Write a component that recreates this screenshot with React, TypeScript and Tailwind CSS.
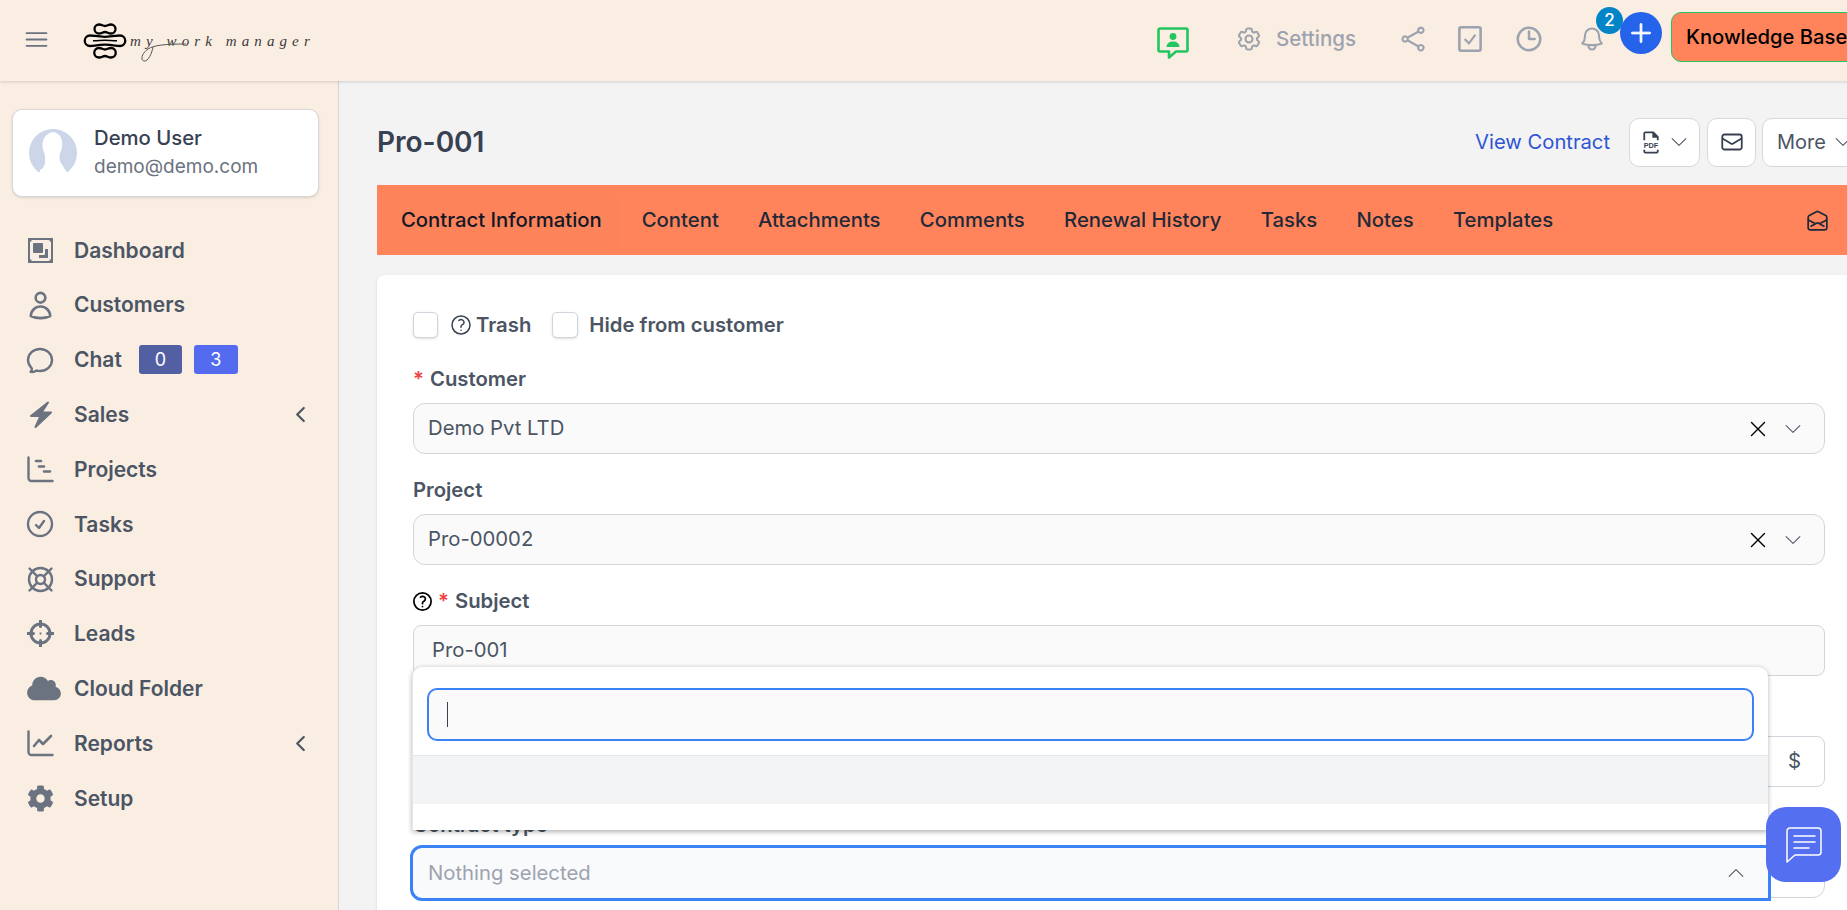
import React from "react";
import {
  HiOutlineBars3,
  HiOutlineBell,
  HiOutlineChatBubbleOvalLeft,
  HiOutlineCheckCircle,
  HiOutlineChevronDown,
  HiOutlineChevronLeft,
  HiOutlineChevronUp,
  HiOutlineClock,
  HiOutlineCog6Tooth,
  HiOutlineEnvelope,
  HiOutlineEnvelopeOpen,
  HiOutlineQuestionMarkCircle,
  HiOutlineShare,
  HiOutlineUser,
  HiOutlineXMark,
  HiPlus,
} from "react-icons/hi2";
import { FaCloud, FaCog } from "react-icons/fa";

function DashboardIcon({ className }: { className?: string }) {
  return (
    <svg viewBox="0 0 27 27" className={className} fill="none">
      <rect x="2" y="2" width="23" height="23" stroke="currentColor" strokeWidth="2" rx="1" />
      <rect x="1" y="1" width="3.5" height="3.5" fill="currentColor" />
      <rect x="22.5" y="1" width="3.5" height="3.5" fill="currentColor" />
      <rect x="1" y="22.5" width="3.5" height="3.5" fill="currentColor" />
      <rect x="22.5" y="22.5" width="3.5" height="3.5" fill="currentColor" />
      <rect x="6" y="6" width="10" height="10" rx="1" fill="currentColor" />
      <path d="M18 12h3v9h-9v-3h5a1 1 0 0 0 1-1z" fill="currentColor" />
    </svg>
  );
}

function BoltIcon({ className }: { className?: string }) {
  return (
    <svg viewBox="0 0 27 27" className={className} fill="currentColor" stroke="currentColor" strokeWidth="2" strokeLinejoin="round">
      <path d="M21 1.500L4 15h9.500L8.500 26 24 11.500h-9.500z" />
    </svg>
  );
}

function GanttIcon({ className }: { className?: string }) {
  return (
    <svg viewBox="0 0 27 27" className={className} fill="none" stroke="currentColor" strokeLinecap="round">
      <path d="M1.500 1.500V22a3 3 0 0 0 3 3h21" strokeWidth="2.400" />
      <path d="M9 5h5M12 10.500h5M17 15.500h6" strokeWidth="2.600" />
    </svg>
  );
}

function LineChartIcon({ className }: { className?: string }) {
  return (
    <svg viewBox="0 0 27 27" className={className} fill="none" stroke="currentColor" strokeLinecap="round" strokeLinejoin="round">
      <path d="M1.500 1.500V22a3 3 0 0 0 3 3h21" strokeWidth="2.400" />
      <path d="M7 16l5-6 4 4 8-8" strokeWidth="2.600" />
    </svg>
  );
}

function LifeRingIcon({ className }: { className?: string }) {
  return (
    <svg viewBox="0 0 27 27" className={className} fill="none" stroke="currentColor" strokeWidth="2.400" strokeLinecap="round">
      <circle cx="13.500" cy="13.500" r="11.500" />
      <circle cx="13.500" cy="13.500" r="4.500" />
      <path d="M2.500 2.500l7.800 7.800M24.500 2.500l-7.800 7.800M2.500 24.500l7.800-7.800M24.500 24.500l-7.800-7.800" />
    </svg>
  );
}

function TargetIcon({ className }: { className?: string }) {
  return (
    <svg viewBox="0 0 27 27" className={className} fill="none" stroke="currentColor">
      <circle cx="13.500" cy="13.500" r="9.500" strokeWidth="3" />
      <path d="M13.500 0.500v6M13.500 20.500v6M0.500 13.500h6M20.500 13.500h6" strokeWidth="3" strokeLinecap="round" />
      <path d="M13.500 12.600v1.800M12.600 13.500h1.800" strokeWidth="1.800" />
    </svg>
  );
}

function ChatUserIcon({ className }: { className?: string }) {
  return (
    <svg viewBox="0 0 32 32" className={className} fill="none">
      <path d="M3 1.500h26a1.500 1.500 0 0 1 1.500 1.500v20a1.500 1.500 0 0 1-1.500 1.500H19l-7 6v-6H3A1.500 1.500 0 0 1 1.500 23V3A1.500 1.500 0 0 1 3 1.500z" stroke="currentColor" strokeWidth="2.600" strokeLinejoin="round" />
      <circle cx="16" cy="9.500" r="3.400" fill="currentColor" />
      <path d="M9.500 20c0-3.600 2.900-5.600 6.500-5.600s6.500 2 6.500 5.600z" fill="currentColor" />
    </svg>
  );
}

function PdfIcon({ className }: { className?: string }) {
  return (
    <svg viewBox="0 0 16 20" className={className} fill="none" stroke="currentColor" strokeWidth="1.600">
      <path d="M2 8V2a1 1 0 0 1 1-1h7l4 4v3" />
      <path d="M10 1v4h4" fill="currentColor" />
      <path d="M2 16.500V18a1 1 0 0 0 1 1h10a1 1 0 0 0 1-1v-1.500" />
      <text x="8" y="14.500" textAnchor="middle" fontSize="6.500" fontWeight="700" fill="currentColor" stroke="none" fontFamily="Liberation Sans, sans-serif">PDF</text>
    </svg>
  );
}

function Avatar() {
  return (
    <svg viewBox="0 0 48 48" className="w-12 h-12 shrink-0">
      <circle cx="24" cy="24" r="24" fill="#ccd6e8" />
      <path d="M24 3c7 1 10 7 9 15-.5 4-2.500 6-2.500 10 0 4 1.500 6 3.500 9 1 2 1 3 3 4v7H11v-7c2-1 3-2 4-4 1.500-3 1-5 1-9 0-4-2-6-2.500-10C13 10 17 4 24 3z" fill="#fff" />
      <rect x="0" y="43" width="48" height="5" fill="#fff" />
    </svg>
  );
}

function ChatWidgetIcon({ className }: { className?: string }) {
  return (
    <svg viewBox="0 0 36 36" className={className} fill="none" stroke="currentColor" strokeWidth="1.500" strokeLinejoin="round" strokeLinecap="round">
      <path d="M4 1h28a3 3 0 0 1 3 3v21a3 3 0 0 1-3 3H9l-8 7V4a3 3 0 0 1 3-3z" />
      <path d="M8 9h21M8 15h21M8 21h15" />
    </svg>
  );
}

const navItems = [
  { label: "Dashboard", icon: <DashboardIcon className="w-[27px] h-[27px]" /> },
  { label: "Customers", icon: <HiOutlineUser strokeWidth={2} className="w-[31px] h-[31px] -ml-[2px]" /> },
  { label: "Chat", icon: <HiOutlineChatBubbleOvalLeft strokeWidth={1.8} className="w-[32px] h-[32px] -ml-[3px]" />, badges: true },
  { label: "Sales", icon: <BoltIcon className="w-[27px] h-[27px]" />, arrow: true },
  { label: "Projects", icon: <GanttIcon className="w-[27px] h-[27px]" /> },
  { label: "Tasks", icon: <HiOutlineCheckCircle strokeWidth={1.8} className="w-[32px] h-[32px] -ml-[3px]" /> },
  { label: "Support", icon: <LifeRingIcon className="w-[27px] h-[27px]" /> },
  { label: "Leads", icon: <TargetIcon className="w-[27px] h-[27px]" /> },
  { label: "Cloud Folder", icon: <FaCloud className="w-[34px] h-[27px]" /> },
  { label: "Reports", icon: <LineChartIcon className="w-[27px] h-[27px]" />, arrow: true },
  { label: "Setup", icon: <FaCog className="w-[27px] h-[27px]" /> },
];

const tabs = ["Content", "Attachments", "Comments", "Renewal History", "Tasks", "Notes", "Templates"];

function Sidebar() {
  return (
    <aside className="w-[339px] shrink-0 bg-[#faeee3] border-r border-[#d1d5db] pl-[12px] pr-[20px] pt-[28px]">
      <div className="w-[307px] h-[88px] flex items-center gap-[17px] pl-[16px] bg-white border border-[#d8d8d8] rounded-[10px] shadow-sm">
        <Avatar />
        <div>
          <div className="text-[20.300px] leading-[28px] font-medium text-[#374151]">Demo User</div>
          <div className="text-[19px] leading-[30px] text-[#6b7280]">demo@demo.com</div>
        </div>
      </div>
      <nav className="mt-[26px]">
        {navItems.map((item) => (
          <div key={item.label} className="h-[54.800px] flex items-center text-[#6b7280]">
            <div className="w-[62px] pl-[15px] shrink-0 flex items-center">{item.icon}</div>
            <span className="text-[21px] font-semibold text-[#4b5563]">{item.label}</span>
            {item.badges && (
              <div className="flex items-center gap-3 ml-[17px]">
                <span className="w-[43px] h-[29px] rounded-[3px] bg-[#535fa3] text-white text-[18px] flex items-center justify-center">0</span>
                <span className="w-[44px] h-[29px] rounded-[3px] bg-[#546bf0] text-white text-[18px] flex items-center justify-center">3</span>
              </div>
            )}
            {item.arrow && <HiOutlineChevronLeft strokeWidth={2.5} className="ml-auto mr-[7px] w-[21px] h-[21px] text-[#4b5563]" />}
          </div>
        ))}
      </nav>
    </aside>
  );
}

function Logo() {
  return (
    <div className="ml-[32px] flex items-center">
      <svg viewBox="0 0 44 36" className="w-[44px] h-[36px] text-black shrink-0" fill="none" stroke="currentColor" strokeWidth="2.300">
        <path d="M16 1.500c3 0 3.500 1.500 6 1.500s3-1.500 6-1.500a4.500 4.500 0 0 1 0 9c-3 0-3.500-1.500-6-1.500s-3 1.500-6 1.500a4.500 4.500 0 0 1 0-9z" />
        <path d="M7 12.500c4 0 7 1.300 15 1.300s11-1.300 15-1.300a5 5 0 0 1 0 10.500c-4 0-7-1.300-15-1.300S11 23 7 23a5 5 0 0 1 0-10.500z" />
        <path d="M10 17.800c5 0 8-.6 12-.6s7 .6 12 .6" strokeWidth="1.400" />
        <path d="M16 25c3 0 3.500 1.500 6 1.500s3-1.500 6-1.500a4.500 4.500 0 0 1 0 9.500c-3 0-3.500-1.500-6-1.500s-3 1.500-6 1.500a4.500 4.500 0 0 1 0-9.500z" />
      </svg>
      <div className="relative ml-[3px]">
        <span className="text-[15px] [font-family:'Liberation_Serif',serif] italic tracking-[5.100px] text-[#3a3a3a] whitespace-nowrap">my work manager</span>
        {/* flourish on the y of the logotype */}
        <svg viewBox="0 0 60 24" className="absolute left-[6px] top-[11px] w-[60px] h-[24px] text-[#555]" fill="none" stroke="currentColor" strokeWidth="1">
          <path d="M50 5C30 5 18 6 12 10 6 14 4 21 8 22c4 1 8-8 9-14" />
        </svg>
      </div>
    </div>
  );
}

function Header() {
  return (
    <header className="h-[81px] w-[1880px] shrink-0 bg-[#faeee3] flex items-center relative z-10 shadow-[0_1px_3px_rgba(0,0,0,0.15)]">
      <HiOutlineBars3 className="ml-[22px] w-[29px] h-[29px] text-[#6b7280] -mt-[2px]" />
      <Logo />
      <div className="ml-auto -mt-[3px] flex items-center shrink-0 text-[#9ca3af]">
        <ChatUserIcon className="w-[32px] h-[32px] text-[#22c55e] mt-[7px]" />
        <HiOutlineCog6Tooth strokeWidth={1.8} className="ml-[46px] w-[28px] h-[28px]" />
        <span className="ml-[13px] text-[20.500px] font-medium">Settings</span>
        <HiOutlineShare strokeWidth={1.8} className="ml-[43px] w-[28px] h-[28px]" />
        <svg viewBox="0 0 22 24" className="ml-[31px] w-[24px] h-[26px]" fill="none" stroke="currentColor" strokeWidth="2.400">
          <rect x="1.200" y="1.200" width="19.600" height="21.600" rx="1.500" />
          <path d="M6 12l4 4 6-8" strokeWidth="2" />
        </svg>
        <HiOutlineClock strokeWidth={2} className="ml-[32px] w-[30px] h-[30px]" />
        <div className="relative ml-[34px] mr-[14px]">
          <HiOutlineBell strokeWidth={1.8} className="w-[28px] h-[28px]" />
          <span className="absolute -top-[18px] left-[18px] w-[27px] h-[27px] rounded-full bg-[#0284c7] text-white text-[17px] font-medium flex items-center justify-center">2</span>
        </div>
        <div className="w-[42px] h-[42px] mb-[12px] rounded-full bg-[#2563eb] text-white flex items-center justify-center relative">
          <HiPlus strokeWidth={0.8} className="w-[28px] h-[28px]" />
        </div>
        <div className="ml-[9px] mb-[4px] w-[209px] h-[50px] flex items-center pl-[14px] rounded-[10px] border border-[#22c55e] bg-[#ff845c] text-black text-[20.200px] font-medium whitespace-nowrap">Knowledge Base</div>
      </div>
    </header>
  );
}

function Label({ children }: { children: React.ReactNode }) {
  return <div className="h-[24px] flex items-center text-[20.300px] font-semibold text-[#4b5563]">{children}</div>;
}

function SelectBox({ value }: { value: string }) {
  return (
    <div className="mt-[12px] h-[51px] flex items-center pl-[14px] pr-[20px] bg-[#fafafa] border border-[#d1d5db] rounded-[12px] text-[20.300px] text-[#4b5563]">
      <span>{value}</span>
      <HiOutlineXMark strokeWidth={1.3} className="ml-auto w-[26px] h-[26px] text-black" />
      <HiOutlineChevronDown strokeWidth={1.1} className="ml-[11px] w-[22px] h-[22px] text-[#4b5563]" />
    </div>
  );
}

function FormCard() {
  return (
    <div className="relative mt-[20px] w-[1488px] h-[700px] bg-white rounded-[8px] shadow-sm pl-[36px] pr-[40px] pt-[37px]">
      <div className="flex items-center h-[26px] text-[20.300px] font-semibold text-[#4b5563]">
        <span className="w-[25px] h-[26px] rounded-[5px] border border-[#d1d5db] bg-white shadow-sm" />
        <HiOutlineQuestionMarkCircle className="ml-[11px] w-[24px] h-[24px] text-[#374151]" />
        <span className="ml-[3px]">Trash</span>
        <span className="ml-[21px] w-[26px] h-[26px] rounded-[5px] border border-[#d1d5db] bg-white shadow-sm" />
        <span className="ml-[11px]">Hide from customer</span>
      </div>

      <div className="mt-[29px]">
        <Label>
          <span className="text-[#ef4444] mr-[6px]">*</span>Customer
        </Label>
        <SelectBox value="Demo Pvt LTD" />
      </div>

      <div className="mt-[24px]">
        <Label>Project</Label>
        <SelectBox value="Pro-00002" />
      </div>

      <div className="mt-[24px]">
        <Label>
          <HiOutlineQuestionMarkCircle strokeWidth={1.8} className="w-[23px] h-[23px] -ml-[2px] text-black mr-[4px]" />
          <span className="text-[#ef4444] mr-[6px]">*</span>Subject
        </Label>
        <div className="mt-[12px] h-[51px] flex items-center pl-[18px] bg-[#fafafa] border border-[#d1d5db] rounded-[8px] text-[20.300px] text-[#4b5563]">Pro-001</div>
      </div>

      <div className="mt-[24px]">
        <Label>Contract Value</Label>
        <div className="mt-[12px] h-[51px] flex items-center justify-end pr-[23px] bg-white border border-[#d1d5db] rounded-[8px] text-[20.300px] text-[#4b5563]">$</div>
      </div>

      <div className="mt-[26px]">
        <Label>Contract type</Label>
        <div className="mt-[10px] h-[51px] bg-white border border-[#d1d5db] rounded-[12px]" />
      </div>

      {/* open select: search panel */}
      <div className="absolute left-[35px] top-[391px] w-[1356px] h-[164px] bg-white rounded-t-[10px] border-t border-l border-[#e5e7eb] shadow-[0_2px_5px_rgba(0,0,0,0.3)] z-10">
        <div className="mx-[14px] mt-[21px] h-[53px] bg-[#fafafa] border-2 border-[#3b82f6] rounded-[10px] flex items-center pl-[18px]">
          <span className="w-px h-[25px] bg-[#374151]" />
        </div>
        <div className="mt-[14px] h-[49px] bg-[#f3f4f6] border-t border-[#e5e7eb]" />
      </div>

      <div className="absolute left-[33px] top-[570px] w-[1361px] h-[56px] bg-[#f9fafb] border-[3px] border-[#3b82f6] rounded-l-[12px] flex items-center pl-[15px] pr-[21px] text-[20.300px] text-[#9ca3af] z-10">
        <span>Nothing selected</span>
        <HiOutlineChevronUp strokeWidth={1.1} className="ml-auto w-[22px] h-[22px] text-[#4b5563]" />
      </div>
    </div>
  );
}

export default function App() {
  return (
    <div className="relative w-[1847px] h-[910px] overflow-hidden flex flex-col bg-[#f3f3f3] [font-family:Inter,sans-serif]">
      <Header />
      <div className="flex flex-1 min-h-0">
        <Sidebar />
        <main className="flex-1 min-w-0 pl-[38px]">
          <div className="w-[1498px] h-[104px] pt-[18px] flex items-center justify-between">
            <h1 className="text-[28px] font-semibold text-[#374151]">Pro-001</h1>
            <div className="flex items-center">
              <span className="text-[20.200px] text-[#2f55d4]">View Contract</span>
              <div className="ml-[19px] w-[71px] h-[49px] bg-white border border-[#d8d8d8] rounded-[10px] flex items-center pl-[12px] text-[#374151]">
                <PdfIcon className="w-[18px] h-[23px]" />
                <HiOutlineChevronDown strokeWidth={1.1} className="ml-[8px] w-[22px] h-[22px] text-[#4b5563]" />
              </div>
              <div className="ml-[7px] w-[49px] h-[49px] bg-white border border-[#d8d8d8] rounded-[10px] flex items-center justify-center">
                <HiOutlineEnvelope strokeWidth={1.8} className="w-[24px] h-[24px] text-[#374151]" />
              </div>
              <div className="ml-[6px] w-[113px] h-[49px] bg-white border border-[#d8d8d8] rounded-[10px] flex items-center pl-[14px] text-[20px] text-[#4b5563]">
                More
                <HiOutlineChevronDown strokeWidth={1.1} className="ml-[6px] w-[22px] h-[22px]" />
              </div>
            </div>
          </div>

          <div className="relative h-[70px] pt-[1px] flex items-center bg-[#ff845c] text-[20.300px] font-medium text-[#1f2937]">
            <div className="ml-[6px] h-[56px] flex items-center px-[18px] rounded-[8px] bg-[#fc835a] text-[#111827]">Contract Information</div>
            <div className="ml-[22px] flex items-center gap-[39.300px]">
              {tabs.map((tab) => (
                <span key={tab}>{tab}</span>
              ))}
            </div>
            <HiOutlineEnvelopeOpen strokeWidth={1.8} className="absolute left-[1429px] w-[23px] h-[23px] text-[#1f2937]" />
          </div>

          <FormCard />
        </main>
      </div>

      <div className="fixed left-[1766px] top-[807px] w-[75px] h-[75px] rounded-[20px] bg-[#546ff0] text-white flex items-center justify-center z-20">
        <ChatWidgetIcon className="w-[36px] h-[36px]" />
      </div>
    </div>
  );
}
